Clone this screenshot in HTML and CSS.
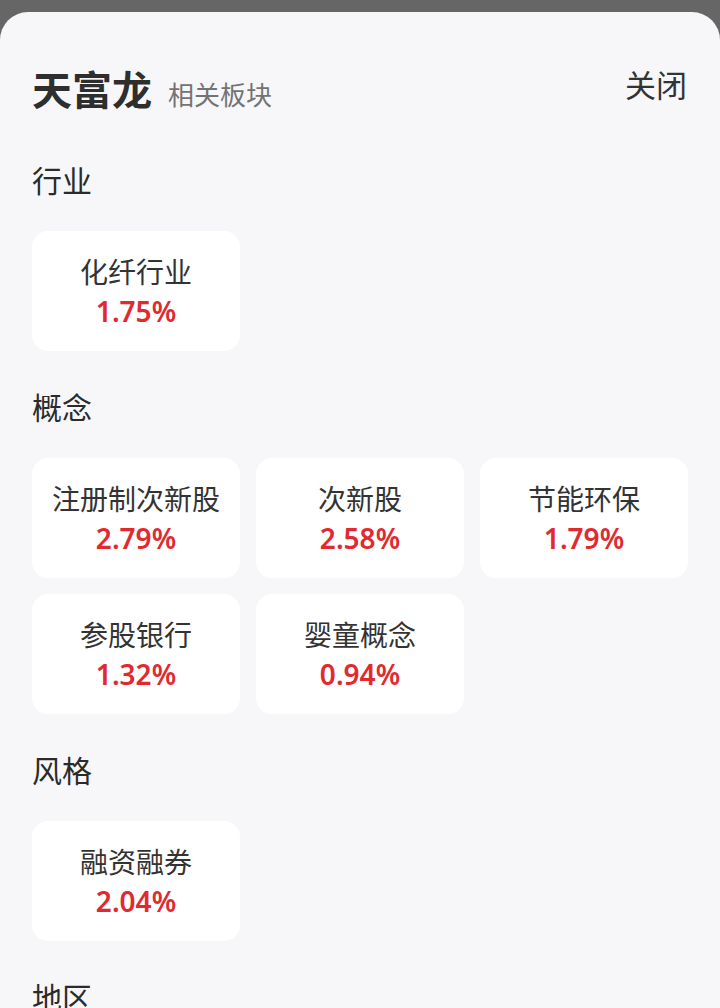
FILE: index.html
```html
<!DOCTYPE html>
<html lang="zh-CN">
<head>
    <meta charset="UTF-8">
    <meta name="viewport" content="width=device-width, initial-scale=1.0">
    <title>天富龙 相关板块</title>
    <link rel="stylesheet" href="styles.css">
</head>
<body>
    <div class="sheet">
        <div class="header">
            <div class="title">
                <span class="name">天富龙</span>
                <span class="sub">相关板块</span>
            </div>
            <div class="close">关闭</div>
        </div>

        <div class="section">行业</div>
        <div class="grid">
            <div class="card"><p class="card-name">化纤行业</p><p class="card-rate">1.75%</p></div>
        </div>

        <div class="section">概念</div>
        <div class="grid">
            <div class="card"><p class="card-name">注册制次新股</p><p class="card-rate">2.79%</p></div>
            <div class="card"><p class="card-name">次新股</p><p class="card-rate">2.58%</p></div>
            <div class="card"><p class="card-name">节能环保</p><p class="card-rate">1.79%</p></div>
            <div class="card"><p class="card-name">参股银行</p><p class="card-rate">1.32%</p></div>
            <div class="card"><p class="card-name">婴童概念</p><p class="card-rate">0.94%</p></div>
        </div>

        <div class="section">风格</div>
        <div class="grid">
            <div class="card"><p class="card-name">融资融券</p><p class="card-rate">2.04%</p></div>
        </div>

        <div class="section">地区</div>
    </div>
</body>
</html>
```

FILE: styles.css
```css
*{margin: 0;padding: 0;box-sizing: border-box;}
html,body{background: #666666;height: 100%;overflow: hidden;}
body{font-family: "Noto Sans CJK SC", "Noto Sans", sans-serif;color: #2b2b2b;}

.sheet{margin-top: 12px;min-height: 1100px;background: #f7f7f9;border-radius: 28px 28px 0 0;padding: 46px 32px 0;}

.header{display: flex;justify-content: space-between;align-items: center;height: 60px;margin-bottom: 1px;}
.title{display: flex;align-items: baseline;}
.name{font-size: 40px;font-weight: bold;line-height: 60px;color: #2e2e2e;}
.sub{font-size: 26px;color: #737373;margin-left: 16px;}
.close{font-size: 31px;line-height: 40px;margin-bottom: 8px;margin-right: 1px;color: #333;}

.section{font-size: 30px;line-height: 40px;margin-top: 41px;margin-bottom: 32px;color: #2b2b2b;}
.grid + .section{margin-top: 35px;}

.grid{display: grid;grid-template-columns: repeat(3, 1fr);gap: 16px;}
.card{height: 120px;background: #fff;border-radius: 16px;padding: 20px 0;text-align: center;}
.card-name{font-size: 28px;line-height: 40px;color: #333;}
.card-rate{font-family: "Noto Sans", sans-serif;font-size: 28px;font-weight: 600;line-height: 40px;color: #e02a2f;}
```
